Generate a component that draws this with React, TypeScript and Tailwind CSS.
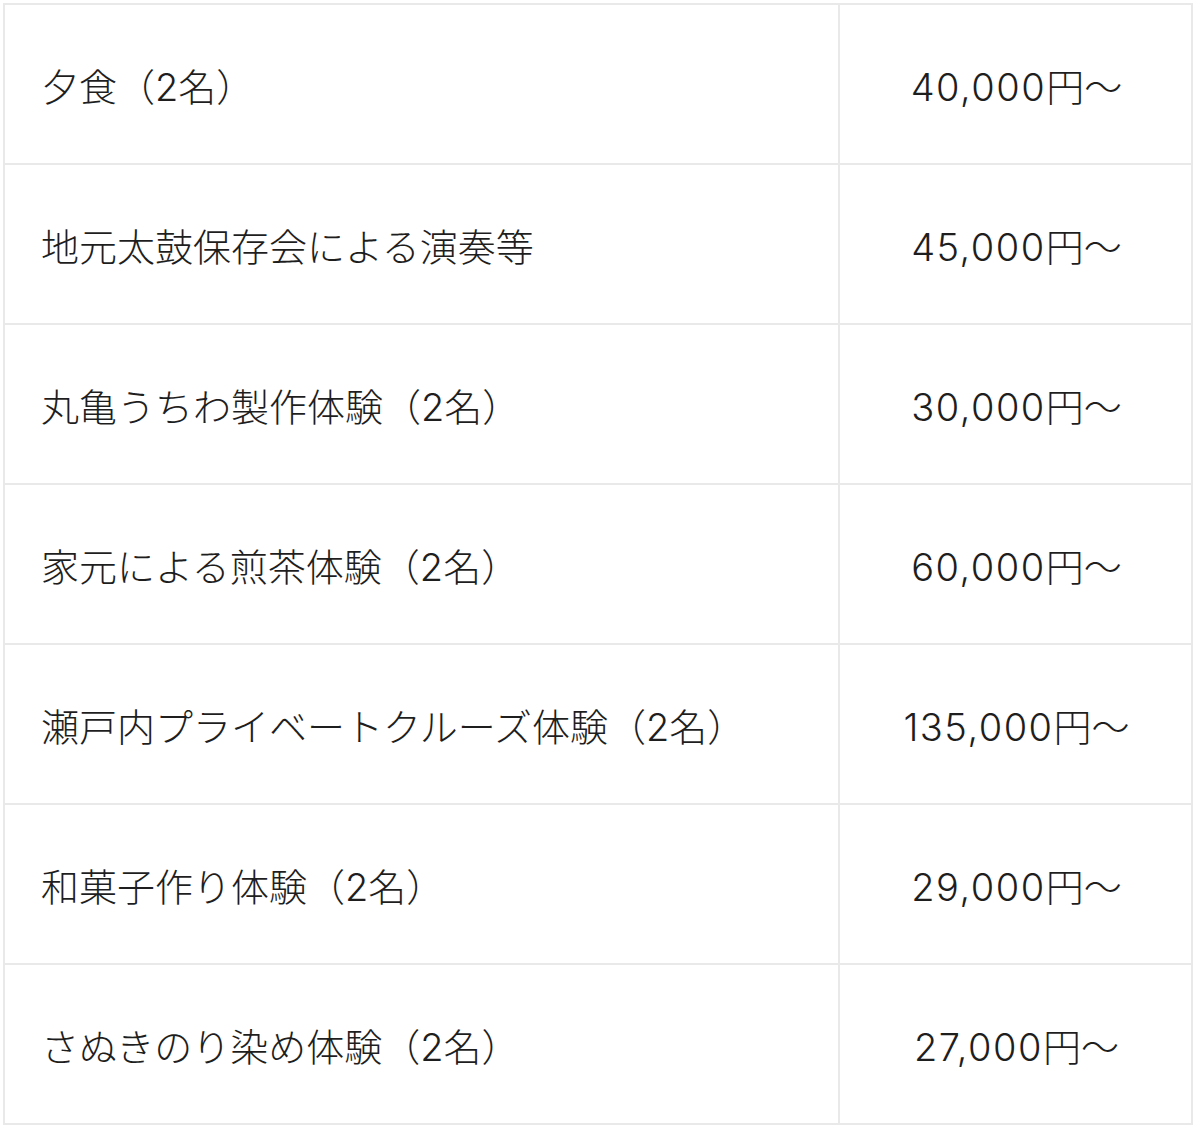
const rows: [string, string][] = [
  ["夕食（2名）", "40,000"],
  ["地元太鼓保存会による演奏等", "45,000"],
  ["丸亀うちわ製作体験（2名）", "30,000"],
  ["家元による煎茶体験（2名）", "60,000"],
  ["瀬戸内プライベートクルーズ体験（2名）", "135,000"],
  ["和菓子作り体験（2名）", "29,000"],
  ["さぬきのり染め体験（2名）", "27,000"],
];

export default function App() {
  return (
    <div className="w-[1200px] h-[1128px] bg-white pt-[3px] pl-[3px]">
      <div
        className="grid w-[1190px] grid-cols-[833px_1fr] gap-[2px] bg-[#e9e9e9] p-[2px] text-[38px] font-light leading-none text-[#1e1e1e]"
        style={{ fontFamily: 'Inter, "Noto Sans CJK JP", sans-serif' }}
      >
        {rows.map(([name, price]) => (
          <div key={name} className="contents">
            <div className="flex h-[158px] items-center bg-white pl-[36px] pt-[6px]">{name}</div>
            <div className="flex h-[158px] items-center justify-center bg-white pt-[6px] pl-[2px]">
              <span className="tracking-[1.5px]">{price}</span>
              <span>円〜</span>
            </div>
          </div>
        ))}
      </div>
    </div>
  );
}
